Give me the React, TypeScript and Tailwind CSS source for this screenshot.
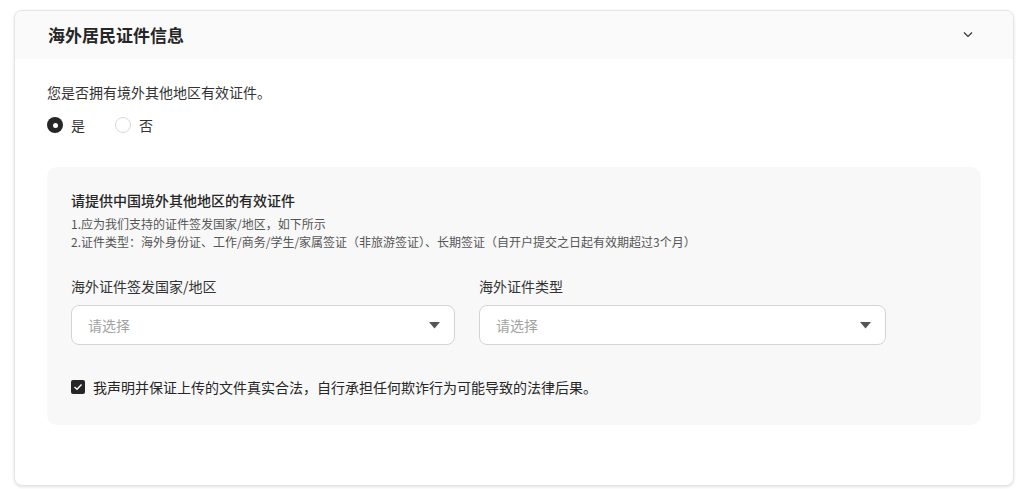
import { useState } from 'react'

const FONT = { fontFamily: '"Noto Sans CJK SC", "Noto Sans", sans-serif' }

function Select({ width }: { width: string }) {
  return (
    <div className={`${width} h-10 flex items-center justify-between pl-4 pr-[14px] bg-white border border-[#d4d4d4] rounded-lg`}>
      <span className="text-sm text-[#a3a3a3]">请选择</span>
      <svg width="11" height="7" viewBox="0 0 11 7">
        <path d="M0 0 H11 L5.5 6.5 Z" fill="#555555" />
      </svg>
    </div>
  )
}

export default function App() {
  const [hasCert, setHasCert] = useState(true)
  const [agreed, setAgreed] = useState(true)

  return (
    <div className="w-[1027px] h-[489px] bg-white pt-[10px] pl-[14px]" style={FONT}>
      <div className="w-[1000px] h-[476px] rounded-lg border border-[#e5e5e5] shadow-[0_1px_3px_rgba(0,0,0,0.12)] bg-white overflow-hidden">
        {/* Header */}
        <div className="h-[48px] bg-[#fafafa] flex items-center justify-between pl-[33px] pr-[40px]">
          <h2 className="text-[17px] font-bold text-[#262626]">海外居民证件信息</h2>
          <svg width="10" height="6" viewBox="0 0 10 6" fill="none">
            <path d="M1 0.5 L5 4.5 L9 0.5" stroke="#333" strokeWidth="1.2" />
          </svg>
        </div>

        <div className="pl-[32px] pr-[32px] pt-[23px]">
          <p className="text-sm text-[#333333] leading-5">您是否拥有境外其他地区有效证件。</p>
          <div className="flex items-center gap-[30px] mt-[13px]">
            <label className="flex items-center gap-2 cursor-pointer" onClick={() => setHasCert(true)}>
              <span className={`w-4 h-4 rounded-full flex items-center justify-center ${hasCert ? 'bg-[#262626]' : 'border border-[#d9d9d9]'}`}>
                {hasCert && <span className="w-[5px] h-[5px] rounded-full bg-white" />}
              </span>
              <span className="text-sm text-[#333333]">是</span>
            </label>
            <label className="flex items-center gap-2 cursor-pointer" onClick={() => setHasCert(false)}>
              <span className={`w-4 h-4 rounded-full flex items-center justify-center ${!hasCert ? 'bg-[#262626]' : 'border border-[#d9d9d9]'}`}>
                {!hasCert && <span className="w-[5px] h-[5px] rounded-full bg-white" />}
              </span>
              <span className="text-sm text-[#333333]">否</span>
            </label>
          </div>

          {/* Gray box */}
          <div className="mt-[32px] w-[934px] h-[258px] rounded-[10px] bg-[#f8f8f8] pl-[24px] pt-[23px]">
            <h3 className="text-sm font-medium text-[#262626] leading-5">请提供中国境外其他地区的有效证件</h3>
            <div className="mt-[5px] text-xs text-[#555555] leading-[18px]">
              <p>1.应为我们支持的证件签发国家/地区，如下所示</p>
              <p>2.证件类型：海外身份证、工作/商务/学生/家属签证（非旅游签证）、长期签证（自开户提交之日起有效期超过3个月）</p>
            </div>

            <div className="flex gap-[24px] mt-[25px]">
              <div>
                <p className="text-sm text-[#333333] leading-5 mb-[9px]">海外证件签发国家/地区</p>
                <Select width="w-[384px]" />
              </div>
              <div>
                <p className="text-sm text-[#333333] leading-5 mb-[9px]">海外证件类型</p>
                <Select width="w-[407px]" />
              </div>
            </div>

            <label className="flex items-center gap-2 mt-[32px] cursor-pointer" onClick={() => setAgreed(!agreed)}>
              <span className={`w-[14px] h-[14px] rounded-[2px] flex items-center justify-center ${agreed ? 'bg-[#262626]' : 'border border-[#d9d9d9] bg-white'}`}>
                {agreed && (
                  <svg width="10" height="8" viewBox="0 0 10 8" fill="none">
                    <path d="M1.5 4 L4 6.3 L8.5 1.5" stroke="white" strokeWidth="1.4" />
                  </svg>
                )}
              </span>
              <span className="text-sm text-[#262626]">我声明并保证上传的文件真实合法，自行承担任何欺诈行为可能导致的法律后果。</span>
            </label>
          </div>
        </div>
      </div>
    </div>
  )
}
